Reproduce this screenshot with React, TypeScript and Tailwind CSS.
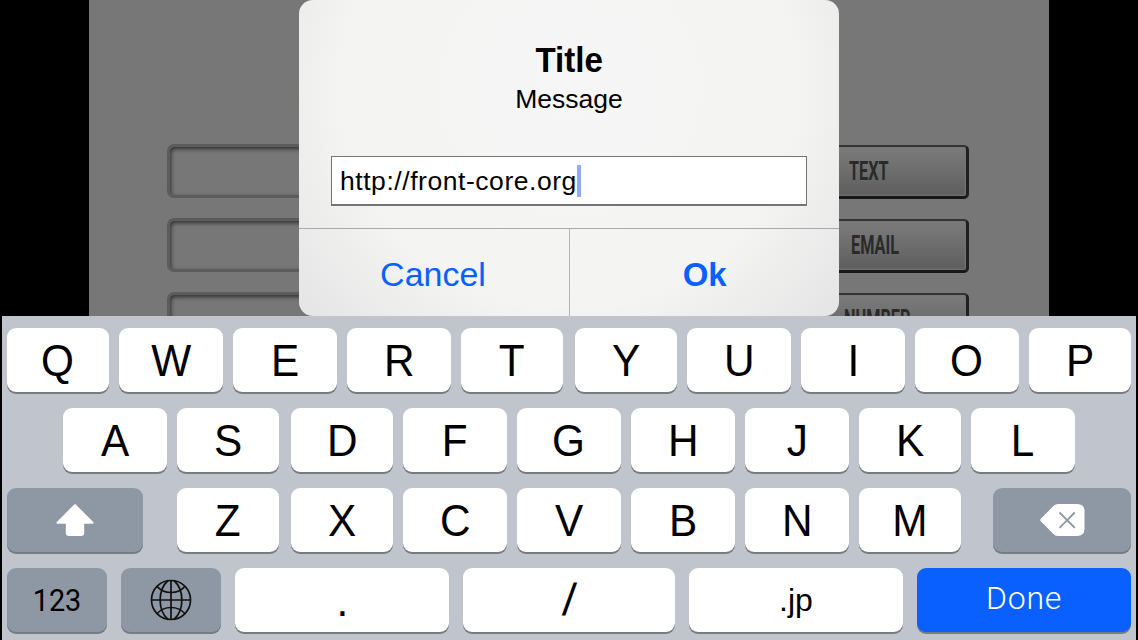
import React from "react";

type KeyDef = { id: string; box: string; label: React.ReactNode; tone?: "light" | "dark" | "blue" };

const tones = {
  light: "bg-white text-black",
  dark: "bg-[#8e97a4] text-black",
  blue: "bg-[#0a60ff] text-white",
};

const ShiftIcon = () => (
  <svg className="h-8 w-[38px]" viewBox="0 0 38 32">
    <path
      d="M18.2.5q.8-.7 1.6 0L37.2 18q1.2 1.6-.7 1.8H28.2V29q0 3-3 3H12.8q-3 0-3-3V19.800H1.500Q-.4 19.600.8 18Z"
      fill="#fff"
    />
  </svg>
);

const GlobeIcon = () => (
  <svg className="mb-px h-[42px] w-[42px]" viewBox="-21 -21 42 42" fill="none" stroke="#111" strokeWidth="1.700">
    <circle r="19.500" />
    <path d="M0-20V20M-20 0H20" />
    <path d="M-3-19.500C-13.500-10-13.500 10-3 19.500M3-19.500C13.500-10 13.500 10 3 19.500" />
    <path d="M-14-13.800C-7-5.400 7-5.400 14-13.800M-14 13.800C-7 5.400 7 5.400 14 13.800" />
  </svg>
);

const DeleteIcon = () => (
  <svg className="h-8 w-[45px]" viewBox="0 0 45 32">
    <path d="M14 1.500Q15.500 0 18 0H37q7.500 0 7.500 7V25q0 7-7.500 7H18q-2.500 0-4-1.500L.8 17.300Q-.4 16 .8 14.700Z" fill="#fff" />
    <path d="M19.500 8.500 34.800 23.800M34.800 8.500 19.500 23.800" stroke="#8e97a4" strokeWidth="1.800" />
  </svg>
);

const row1: KeyDef[] = [
  { id: "q", box: "ml-[5px] w-[102px]", label: "Q" },
  { id: "w", box: "ml-[10px] w-[104px]", label: "W" },
  { id: "e", box: "ml-[10px] w-[104px]", label: "E" },
  { id: "r", box: "ml-[10px] w-[104px]", label: "R" },
  { id: "t", box: "ml-[10px] w-[102px]", label: "T" },
  { id: "y", box: "ml-[12px] w-[102px]", label: "Y" },
  { id: "u", box: "ml-[10px] w-[104px]", label: "U" },
  { id: "i", box: "ml-[10px] w-[104px]", label: "I" },
  { id: "o", box: "ml-[10px] w-[104px]", label: "O" },
  { id: "p", box: "ml-[10px] w-[102px]", label: "P" },
];

const row2: KeyDef[] = [
  { id: "a", box: "ml-[61px] w-[104px]", label: "A" },
  { id: "s", box: "ml-[10px] w-[102px]", label: "S" },
  { id: "d", box: "ml-[12px] w-[102px]", label: "D" },
  { id: "f", box: "ml-[10px] w-[104px]", label: "F" },
  { id: "g", box: "ml-[10px] w-[104px]", label: "G" },
  { id: "h", box: "ml-[10px] w-[104px]", label: "H" },
  { id: "j", box: "ml-[10px] w-[104px]", label: "J" },
  { id: "k", box: "ml-[10px] w-[102px]", label: "K" },
  { id: "l", box: "ml-[10px] w-[104px]", label: "L" },
];

const row3: KeyDef[] = [
  { id: "shift", box: "ml-[5px] w-[136px]", label: <ShiftIcon />, tone: "dark" },
  { id: "z", box: "ml-[34px] w-[102px]", label: "Z" },
  { id: "x", box: "ml-[12px] w-[102px]", label: "X" },
  { id: "c", box: "ml-[10px] w-[104px]", label: "C" },
  { id: "v", box: "ml-[10px] w-[104px]", label: "V" },
  { id: "b", box: "ml-[10px] w-[104px]", label: "B" },
  { id: "n", box: "ml-[10px] w-[104px]", label: "N" },
  { id: "m", box: "ml-[10px] w-[102px]", label: "M" },
  { id: "delete", box: "ml-[32px] w-[138px]", label: <DeleteIcon />, tone: "dark" },
];

const row4: KeyDef[] = [
  {
    id: "123",
    box: "ml-[5px] w-[100px]",
    label: <span className="scale-x-[0.9] pb-px font-['Roboto',sans-serif] text-[32px]">123</span>,
    tone: "dark",
  },
  { id: "globe", box: "ml-[14px] w-[100px]", label: <GlobeIcon />, tone: "dark" },
  { id: "dot", box: "ml-[14px] w-[214px]", label: "." },
  {
    id: "slash",
    box: "ml-[14px] w-[212px]",
    label: <span className="-skew-x-[5deg]">/</span>,
  },
  { id: "jp", box: "ml-[14px] w-[214px]", label: <span className="pb-px text-[32px]">.jp</span> },
  {
    id: "done",
    box: "ml-[14px] w-[214px]",
    label: <span className="pb-[5px] font-['Roboto',sans-serif] text-[32px] font-light tracking-[0.8px]">Done</span>,
    tone: "blue",
  },
];

function Key({ box, label, tone = "light" }: KeyDef) {
  return (
    <button
      className={`flex h-16 shrink-0 items-center justify-center rounded-[9px] text-[45px] leading-[64px] shadow-[0_2px_0_#777b81] ${box} ${tones[tone]}`}
    >
      {typeof label === "string" ? <span className="scale-x-[0.94] pt-px">{label}</span> : label}
    </button>
  );
}

function KeyRow({ keys }: { keys: KeyDef[] }) {
  return (
    <div className="flex">
      {keys.map((k) => (
        <Key {...k} key={k.id} />
      ))}
    </div>
  );
}

const options = [
  { name: "TEXT", pad: "pl-[46px]" },
  { name: "EMAIL", pad: "pl-[48px]" },
  { name: "NUMBER", pad: "pl-[41px]" },
];

function FormBehind() {
  return (
    <div className="mx-auto flex h-[316px] w-[960px] flex-col gap-[20px] overflow-hidden bg-[#777] pt-[144px] pr-[80px] pl-[78px]">
      {options.map((o) => (
        <div key={o.name} className="flex h-[54px] shrink-0 justify-between">
          <div className="h-[54px] w-[200px] rounded-[7px] border-[3px] border-[#5c5c5c] shadow-[inset_1px_2px_4px_0_#303030]" />
          <div
            className={`mt-px flex h-[54px] w-[168px] items-center rounded-[5px] border-2 border-[#343434] border-r-[3px] border-r-[#202020] border-b-[3px] border-b-[#181818] bg-linear-to-b from-[#7a7b7a] via-[#6c6d6c] to-[#5d5d5d] shadow-[inset_0_0_2px_1px_#777] ${o.pad}`}
          >
            <span className="origin-left scale-x-[0.65] font-['Roboto',sans-serif] text-[25px] leading-none font-bold text-[#2a2a2a]">
              {o.name}
            </span>
          </div>
        </div>
      ))}
    </div>
  );
}

function Alert() {
  return (
    <div className="absolute top-0 left-[299px] flex h-[316px] w-[540px] flex-col overflow-hidden rounded-[14px] bg-[radial-gradient(ellipse_64%_105%_at_50%_28%,#f6f6f6_0%,#f4f4f3_65%,#e6e6e6_100%)] text-black">
      <div className="flex h-[228px] flex-col items-center pt-[40px]">
        <div className="scale-x-[0.96] text-[34.500px] leading-[40px] font-bold">Title</div>
        <div className="mt-[4px] text-[26.500px] leading-[30px]">Message</div>
        <div className="mt-[42px] flex h-[50px] w-[476px] items-center border border-b-2 border-[#747474] bg-white pl-[8px]">
          <span className="text-[26.500px] leading-[48px] tracking-[0.550px]">http://front-core.org</span>
          <span className="h-8 w-1 bg-[#94a8fb]" />
        </div>
      </div>
      <div className="flex h-[88px] border-t border-[#a9a9ac] text-[34px] leading-[91px] text-[#0a60ff]">
        <button className="w-[270px]">
          <span className="relative -left-px">Cancel</span>
        </button>
        <button className="w-[270px] border-l border-[#b4b4b8] font-bold">
          <span className="inline-block scale-x-[0.97]">Ok</span>
        </button>
      </div>
    </div>
  );
}

export default function App() {
  return (
    <main className="relative h-[640px] w-[1138px] overflow-hidden bg-black font-['Liberation_Sans',Arial,sans-serif]">
      <FormBehind />
      <Alert />
      <div className="mx-[2px] flex h-[324px] flex-col gap-4 bg-[#bfc4cd] pt-3">
        <KeyRow keys={row1} />
        <KeyRow keys={row2} />
        <KeyRow keys={row3} />
        <KeyRow keys={row4} />
      </div>
    </main>
  );
}
